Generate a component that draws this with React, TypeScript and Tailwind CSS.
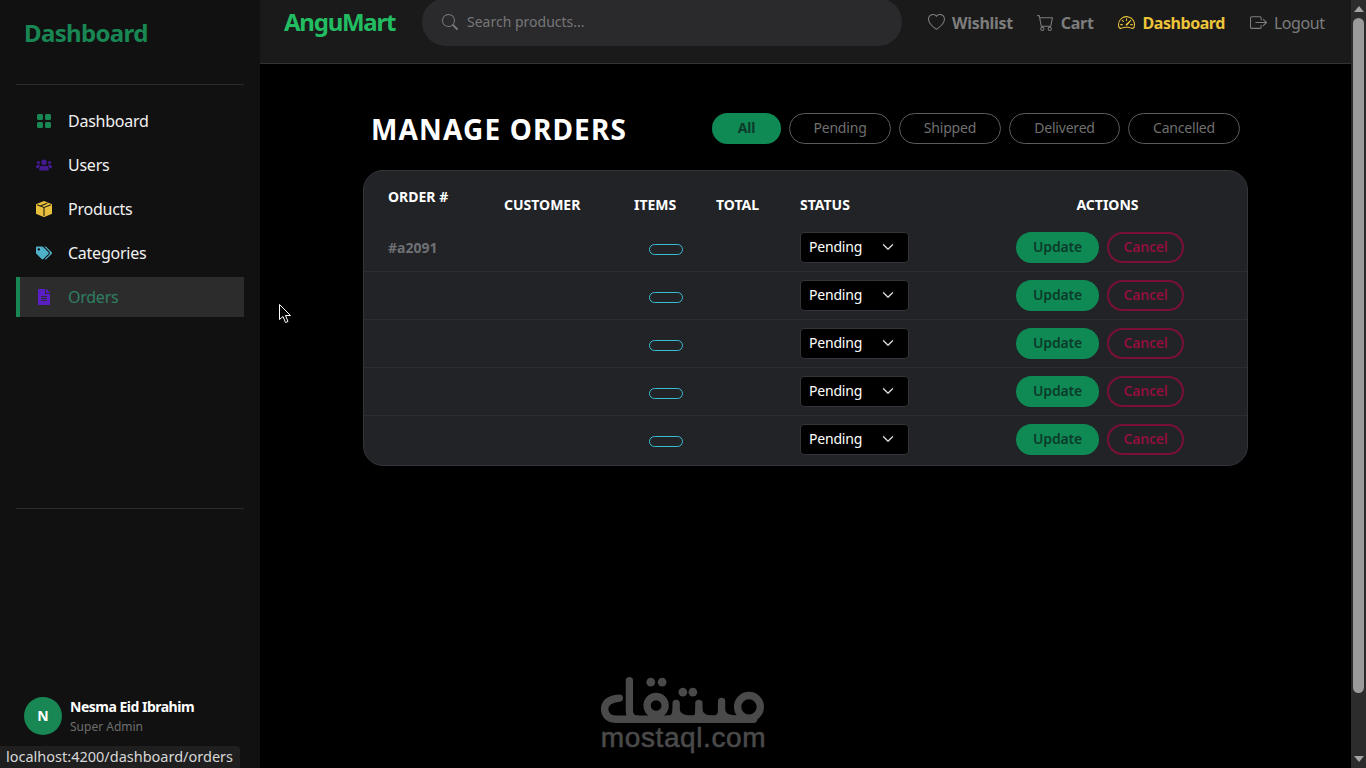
import { ReactNode } from "react";
import { FaFileAlt, FaTags, FaUsers } from "react-icons/fa";
import {
  BsBoxArrowRight,
  BsBoxSeamFill,
  BsCart,
  BsChevronDown,
  BsGridFill,
  BsHeart,
  BsSearch,
  BsSpeedometer2,
} from "react-icons/bs";

const sideLinks = [
  { name: "Dashboard", icon: <BsGridFill />, color: "text-[#198754]" },
  { name: "Users", icon: <FaUsers />, color: "text-[#431a90]" },
  { name: "Products", icon: <BsBoxSeamFill />, color: "text-[#e8bf3c]" },
  { name: "Categories", icon: <FaTags />, color: "text-[#4fb0c9]" },
  { name: "Orders", icon: <FaFileAlt />, color: "text-[#5a1fc4]", active: true },
];

const filters = [
  { name: "All", width: "w-[69px]", active: true },
  { name: "Pending", width: "w-[102px]" },
  { name: "Shipped", width: "w-[102px]" },
  { name: "Delivered", width: "w-[111px]" },
  { name: "Cancelled", width: "w-[112px]" },
];

function Sidebar() {
  return (
    <aside className="flex h-full w-[260px] shrink-0 flex-col bg-[#111111] px-4">
      <div className="flex h-[85px] shrink-0 items-start border-b border-[#2b2b2b] px-2 pt-[16px]">
        <h1 className="text-[24px] font-bold leading-[34px] tracking-[-0.65px] text-[#198754]">Dashboard</h1>
      </div>
      <nav className="flex h-[424px] shrink-0 flex-col gap-1 border-b border-[#2b2b2b] pt-4">
        {sideLinks.map((link) => (
          <a
            key={link.name}
            className={`flex h-10 items-center gap-4 text-[16px] tracking-[-0.25px] ${
              link.active
                ? "border-l-4 border-[#198754] bg-[#2d2c2c] pl-4 text-[#2f7f63]"
                : "pl-5 text-[#f1f1f1]"
            }`}
          >
            <span className={`w-4 text-[16px] ${link.color}`}>{link.icon}</span>
            {link.name}
          </a>
        ))}
      </nav>
      <div className="mt-[185px] flex items-center gap-2 px-2">
        <div className="flex h-[38px] w-[38px] items-center justify-center rounded-full bg-[#198754] text-[14px] font-bold text-white">
          N
        </div>
        <div className="flex flex-col pt-[3px]">
          <span className="text-[14px] font-bold leading-5 tracking-[-0.5px] text-white">Nesma Eid Ibrahim</span>
          <span className="text-[12px] leading-5 text-[#6e6e6e]">Super Admin</span>
        </div>
      </div>
    </aside>
  );
}

function NavLink({ icon, children, className }: { icon: ReactNode; children: ReactNode; className: string }) {
  return (
    <a className={`flex items-center text-[16px] ${className}`}>
      <span className="text-[17px]">{icon}</span>
      {children}
    </a>
  );
}

function Navbar() {
  return (
    <header className="flex h-16 shrink-0 items-start border-b border-[#333] bg-[#1a1a1a] pl-6">
      <a className="w-[138px] pt-[5px] text-[24px] font-bold leading-[34px] tracking-[-1.25px] text-[#22bd62]">AnguMart</a>
      <div className="-mt-[2px] flex h-12 w-[480px] items-center gap-[9px] rounded-full bg-[#2a2a2c] pl-5 text-[14px] text-[#77777a]">
        <BsSearch className="text-[16px]" />
        <span className="pb-[2px]">Search products...</span>
      </div>
      <div className="ml-[26px] flex h-[45px] items-center gap-6">
        <NavLink icon={<BsHeart />} className="gap-[7px] font-bold tracking-[-0.3px] text-[#7d7d7d]">Wishlist</NavLink>
        <NavLink icon={<BsCart />} className="gap-[7px] font-bold tracking-[-0.3px] text-[#7d7d7d]">Cart</NavLink>
        <NavLink icon={<BsSpeedometer2 />} className="gap-2 font-bold tracking-[-0.45px] text-[#eec53a]">Dashboard</NavLink>
        <NavLink icon={<BsBoxArrowRight />} className="ml-px gap-[7px] tracking-[-0.45px] text-[#7d7d7d]">Logout</NavLink>
      </div>
    </header>
  );
}

function OrderRow({ id }: { id?: string }) {
  return (
    <tr className="h-12 [&:last-child>td]:border-transparent [&>td]:border-b [&>td]:border-[#2b2d31]">
      <td className="pl-6 text-[14px] font-bold text-[#6f7073]">{id}</td>
      <td />
      <td className="pl-[35px]">
        <div className="mt-1 h-[11px] w-[34px] rounded-full border border-[#38bdd2]" />
      </td>
      <td />
      <td className="pl-5">
        <div className="relative w-[109px]">
          <select className="h-[31px] w-full appearance-none rounded border border-[#33353a] bg-black pb-[2px] pl-2 text-[14px] tracking-[-0.2px] text-white outline-none">
            <option>Pending</option>
          </select>
          <BsChevronDown className="pointer-events-none absolute right-[15px] top-[9px] stroke-[0.8px] text-[12px] text-white" />
        </div>
      </td>
      <td className="pl-5">
        <div className="flex gap-2">
          <button className="h-[31px] w-[83px] rounded-full bg-[#0f8a55] pb-[2px] text-[14px] font-semibold tracking-[-0.2px] text-[#0b3b2a]">
            Update
          </button>
          <button className="h-[31px] w-[77px] rounded-full border-2 border-[#7a1035] pb-[2px] text-[14px] font-semibold tracking-[-0.2px] text-[#8f103c]">
            Cancel
          </button>
        </div>
      </td>
    </tr>
  );
}

function OrdersTable() {
  return (
    <div className="mx-auto mt-[26px] w-[885px] overflow-hidden rounded-[20px] border border-[#33353a] bg-[#212327] pb-px">
      <table className="w-full table-fixed border-separate border-spacing-0">
        <thead>
          <tr className="h-[53px] text-left text-[14px] font-bold text-white">
            <th className="w-[120px] pl-6 pt-[15px] align-top">ORDER #</th>
            <th className="w-[130px] pl-5 pt-[14px]">CUSTOMER</th>
            <th className="w-[82px] pl-5 pt-[14px]">ITEMS</th>
            <th className="w-[84px] pl-5 pt-[14px]">TOTAL</th>
            <th className="w-[216px] pl-5 pt-[14px]">STATUS</th>
            <th className="pl-5 pr-12 pt-[14px] text-center">ACTIONS</th>
          </tr>
        </thead>
        <tbody>
          <OrderRow id="#a2091" />
          <OrderRow />
          <OrderRow />
          <OrderRow />
          <OrderRow />
        </tbody>
      </table>
    </div>
  );
}

function MostaqlLogo() {
  return (
    <div className="pointer-events-none absolute left-[600px] top-[676px] flex w-[167px] flex-col items-center">
      <svg width="167" height="47" viewBox="60 48 500 140" fill="none" stroke="#4a4a4a" strokeWidth="22" strokeLinecap="round">
        <path d="M118 114 Q72 118 74 150 Q78 177 110 177 H520" />
        <path d="M148 62 V150 Q148 177 172 177" />
        <circle cx="228" cy="136" r="27" />
        <path d="M262 177 Q288 177 288 150 V130" />
        <path d="M288 150 Q290 177 340 177 Q356 177 356 150 V130" />
        <path d="M356 150 Q358 177 400 177 Q424 177 424 150 V124" />
        <circle cx="506" cy="140" r="34" />
        <path d="M424 150 Q426 177 480 177" />
        <circle cx="212" cy="66" r="13" fill="#4a4a4a" stroke="none" />
        <circle cx="246" cy="66" r="13" fill="#4a4a4a" stroke="none" />
        <circle cx="308" cy="96" r="13" fill="#4a4a4a" stroke="none" />
        <circle cx="338" cy="96" r="13" fill="#4a4a4a" stroke="none" />
      </svg>
      <span className="mt-[2px] font-['Liberation_Sans',sans-serif] text-[28px] leading-[26px] tracking-[0.6px] text-[#4a4a4a] [-webkit-text-stroke:0.6px_#4a4a4a]">
        mostaql.com
      </span>
    </div>
  );
}

export default function App() {
  return (
    <div className="relative flex h-screen w-full overflow-hidden bg-black font-['Noto_Sans',sans-serif]">
      <Sidebar />
      <div className="flex min-w-0 flex-1 flex-col">
        <Navbar />
        <main className="flex-1">
          <div className="mx-auto mt-[49px] flex h-[31px] w-[885px] items-center justify-between pl-2 pr-2">
            <h2 className="text-[28px] font-bold leading-8 tracking-[1.15px] text-white">MANAGE ORDERS</h2>
            <div className="flex gap-2">
              {filters.map((f) => (
                <button
                  key={f.name}
                  className={`h-[31px] rounded-full pb-[2px] text-[14px] tracking-[-0.2px] ${f.width} ${
                    f.active
                      ? "bg-[#0f8a55] font-bold text-[#0c3b2b]"
                      : "border border-[#5c5c5c] text-[#6f6f6f]"
                  }`}
                >
                  {f.name}
                </button>
              ))}
            </div>
          </div>
          <OrdersTable />
        </main>
      </div>

      {/* scrollbar */}
      <div className="flex h-full w-[15px] shrink-0 flex-col items-center bg-[#2c2c2c]">
        <div className="mt-[6px] h-0 w-0 border-x-[5px] border-b-[6px] border-x-transparent border-b-[#a3a3a3]" />
        <div className="mt-[6px] h-[675px] w-[11px] rounded-[6px] bg-[#9b9b9b]" />
        <div className="mt-auto mb-[6px] h-0 w-0 border-x-[5px] border-t-[6px] border-x-transparent border-t-[#a3a3a3]" />
      </div>

      <MostaqlLogo />

      {/* mouse pointer */}
      <svg className="pointer-events-none absolute left-[279px] top-[304px]" width="13" height="20" viewBox="0 0 13 20">
        <path d="M0.5 0.5 L0.5 15.5 L4 12.5 L6.5 18.5 L9 17.5 L6.5 11.5 L11.5 11.5 Z" fill="#000" stroke="#fff" />
      </svg>

      {/* link status bubble */}
      <div className="absolute bottom-0 left-0 flex h-[22px] w-[240px] items-center rounded-tr bg-[#1f1f1f] pb-px pl-[6px] text-[14.5px] text-[#d8d8d8]">
        localhost:4200/dashboard/orders
      </div>
    </div>
  );
}
